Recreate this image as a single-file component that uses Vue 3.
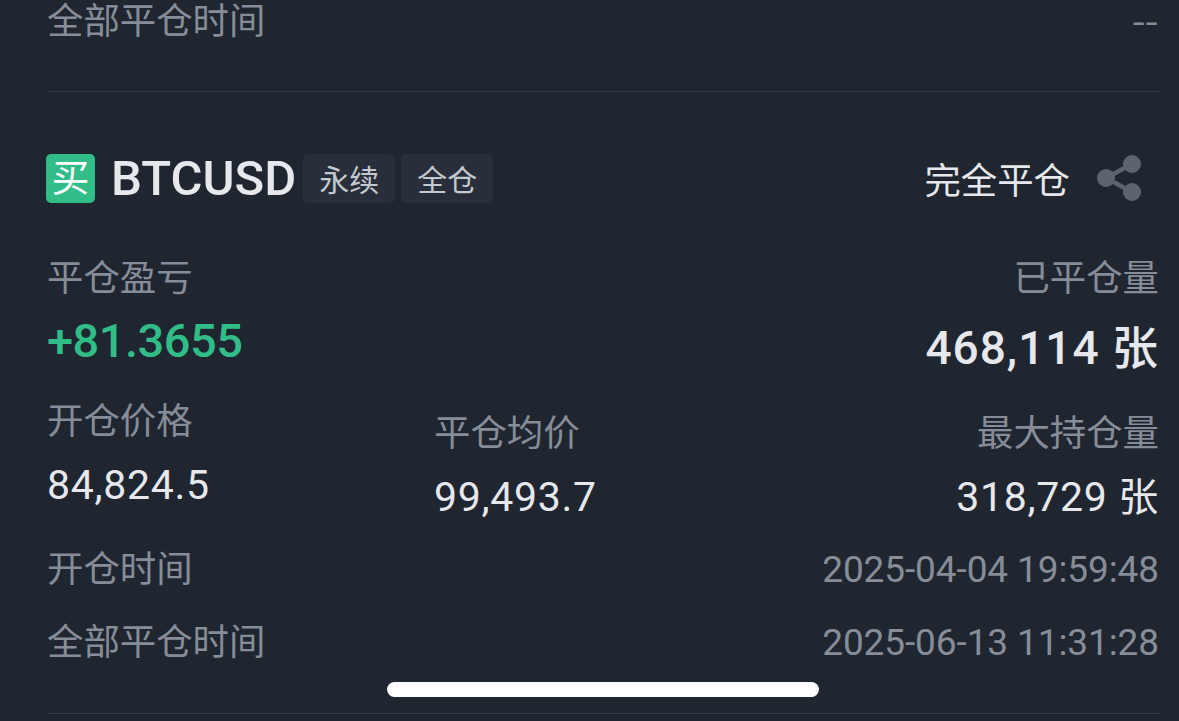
<script setup>
const middle = [
  { label: '开仓价格', value: '84,824.5' },
  { label: '平仓均价', value: '99,493.7' },
]
</script>

<template>
  <main class="page">
    <section class="top-row">
      <span class="label">全部平仓时间</span>
      <span class="dash">--</span>
    </section>
    <hr class="rule" />

    <header class="head">
      <div class="head-left">
        <span class="buy">买</span>
        <span class="symbol">BTCUSD</span>
        <span class="tag first">永续</span>
        <span class="tag">全仓</span>
      </div>
      <div class="head-right">
        <span class="status">完全平仓</span>
        <svg class="share" viewBox="0 0 46 46" width="46" height="46" aria-hidden="true">
          <path d="M35 9 L9 23 L35 37" fill="none" stroke="#5c6470" stroke-width="4.5" />
          <circle cx="35" cy="9" r="9" fill="#5c6470" />
          <circle cx="9" cy="23" r="9" fill="#5c6470" />
          <circle cx="35" cy="37" r="9" fill="#5c6470" />
        </svg>
      </div>
    </header>

    <section class="pnl-row">
      <div class="cell">
        <span class="label">平仓盈亏</span>
        <span class="pnl">+81.3655</span>
      </div>
      <div class="cell right">
        <span class="label">已平仓量</span>
        <span class="big">468,114 <span class="unit">张</span></span>
      </div>
    </section>

    <section class="mid-row">
      <div class="cell mid-a">
        <span class="label">{{ middle[0].label }}</span>
        <span class="value">{{ middle[0].value }}</span>
      </div>
      <div class="cell mid-b">
        <span class="label">{{ middle[1].label }}</span>
        <span class="value">{{ middle[1].value }}</span>
      </div>
      <div class="cell right mid-c">
        <span class="label">最大持仓量</span>
        <span class="value">318,729 <span class="unit">张</span></span>
      </div>
    </section>

    <section class="time-row first-time">
      <span class="label">开仓时间</span>
      <span class="time">2025-04-04 19:59:48</span>
    </section>
    <section class="time-row">
      <span class="label">全部平仓时间</span>
      <span class="time">2025-06-13 11:31:28</span>
    </section>
    <hr class="rule bottom" />

    <div class="home"></div>
  </main>
</template>

<style>
html, body { margin: 0; background: #1f2630; }
</style>

<style scoped>
.page {
  position: relative;
  box-sizing: border-box;
  width: 1179px;
  height: 721px;
  padding: 0 20px 0 47px;
  overflow: hidden;
  background: #1f2630;
  color: #eaecef;
  font-family: Roboto, "Noto Sans CJK SC", sans-serif;
}
.label {
  font-size: 36.4px;
  line-height: 44px;
  color: #868d98;
  white-space: nowrap;
}
.top-row {
  display: flex;
  justify-content: space-between;
  height: 44px;
}
.dash {
  font-size: 34px;
  line-height: 44px;
  letter-spacing: 1px;
  color: #868d98;
  transform: scaleX(1.25);
  transform-origin: right center;
}
.rule {
  height: 1px;
  margin: 47px -1px 0 1px;
  border: 0;
  background: #343b46;
}
.head {
  display: flex;
  justify-content: space-between;
  align-items: center;
  height: 50px;
  margin: 61px 0 0 -1px;
}
.head-left { display: flex; align-items: center; }
.buy {
  display: flex;
  align-items: center;
  justify-content: center;
  width: 49px;
  height: 49px;
  border-radius: 5px;
  background: #31bd87;
  color: #fff;
  font-size: 38px;
  line-height: 1;
}
.symbol {
  margin-left: 16px;
  font-size: 49px;
  font-weight: 500;
  letter-spacing: 0;
  color: #e6e8ec;
}
.tag {
  display: flex;
  align-items: center;
  justify-content: center;
  width: 92px;
  height: 49px;
  margin-left: 6px;
  border-radius: 5px;
  background: #282f3a;
  font-size: 30px;
  color: #c4c9d0;
}
.tag.first { margin-left: 7px; }
.head-right { display: flex; align-items: center; margin-right: 16px; }
.status { font-size: 36.4px; color: #e6e8ec; }
.share { margin-left: 27px; }
.pnl-row, .mid-row, .time-row {
  display: flex;
  justify-content: space-between;
}
.pnl-row { margin-top: 54px; }
.cell { display: flex; flex-direction: column; }
.right { align-items: flex-end; }
.pnl {
  margin-top: 18px;
  font-size: 47px;
  line-height: 44px;
  font-weight: 500;
  letter-spacing: -0.5px;
  color: #31bd87;
}
.big {
  margin-top: 23px;
  font-size: 46px;
  line-height: 48px;
  font-weight: 500;
  letter-spacing: 1px;
  color: #e6e8ec;
}
.mid-row { align-items: flex-start; margin-top: -5px; }
.mid-a { width: 387px; margin-top: 33px; }
.mid-b { margin-top: 45px; }
.mid-c { margin-left: auto; margin-top: 45px; }
.value {
  margin-top: 19px;
  font-size: 41px;
  line-height: 44px;
  letter-spacing: 0.7px;
  color: #e6e8ec;
}
.unit { font-size: 40px; }
.big .unit { font-size: 46px; }
.time-row { margin-top: 29px; align-items: center; }
.first-time { margin-top: 28px; }
.time {
  font-size: 37px;
  line-height: 44px;
  letter-spacing: -0.1px;
  color: #868d98;
}
.bottom { margin-top: 48px; }
.home {
  position: absolute;
  left: 387px;
  top: 682px;
  width: 432px;
  height: 15px;
  border-radius: 8px;
  background: #fff;
}
</style>
